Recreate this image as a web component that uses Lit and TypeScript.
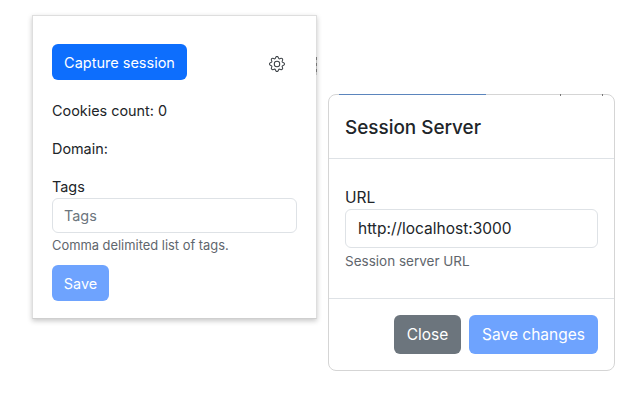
import { LitElement, html, css } from "lit";
import { customElement } from "lit/decorators.js";

@customElement("app-root")
export class AppRoot extends LitElement {
  static styles = css`
    :host { display: block; width: 640px; height: 400px; overflow: hidden; background: #fff; font-family: Inter, "Liberation Sans", sans-serif; color: #212529; }
    * { box-sizing: border-box; }
    .page { display: flex; align-items: flex-start; padding: 15px 0 0 32px; gap: 11px; }
    .panel { position: relative; width: 285px; height: 304px; background: #fff; border: 1px solid #dedede; border-bottom-color: #cfcfcf; box-shadow: 0 2px 5px rgba(0,0,0,.22); padding: 28px 19px 0; font-size: 14.4px; }
    .edge { position: absolute; left: 283px; top: 41px; width: 1px; height: 18px; background: repeating-linear-gradient(#777 0 3px, #bbb 3px 6px); }
    .top { display: flex; justify-content: space-between; align-items: center; padding-right: 12px; }
    .btn { display: flex; align-items: center; justify-content: center; border: 0; color: #fff; font: inherit; padding: 0; }
    .capture { width: 135px; height: 36px; border-radius: 6px; background: #0d6efd; font-size: 14.5px; }
    .gear { width: 16px; height: 16px; margin-top: 3px; fill: #3a3f44; display: block; }
    .line { margin-top: 21px; line-height: 20px; height: 20px; }
    .line.second { margin-top: 18px; }
    .line.tags { margin-top: 18px; }
    .input { display: flex; align-items: center; border: 1px solid #dee2e6; border-radius: 6px; }
    .tagsinput { width: 245px; height: 35px; margin-top: 1px; padding-left: 11px; color: #6c757d; }
    .help { color: #5f666d; font-size: 12.9px; line-height: 16px; margin-top: 5px; }
    .save { width: 57px; height: 36px; margin-top: 11px; border-radius: 6px; background: #6ea3fe; }
    .modal { position: relative; width: 287px; height: 277px; margin-top: 79px; border: 1px solid #d5d5d5; border-radius: 8px; background: #fff; font-size: 15.5px; }
    .tab { position: absolute; left: 10px; top: -1px; width: 147px; height: 1px; background: #5b85bd; }
    .tick { position: absolute; top: -1px; width: 1px; height: 2px; background: #777; }
    .t1 { left: 231px; }
    .t2 { left: 273px; }
    .head { height: 64px; display: flex; align-items: center; padding: 2px 0 0 16px; border-bottom: 1px solid #dee2e6; font-size: 18.9px; font-weight: 500; }
    .body { height: 139px; padding: 29px 16px 0; }
    .body .label { line-height: 20px; height: 20px; }
    .urlinput { width: 253px; height: 39px; margin-top: 1px; padding-left: 12px; color: #212529; }
    .body .help { font-size: 13.5px; margin-top: 4px; line-height: 18px; }
    .foot { display: flex; justify-content: flex-end; gap: 8px; padding: 16px 16px 0; border-top: 1px solid #dee2e6; }
    .foot .btn { height: 39px; border-radius: 6px; }
    .close { width: 67px; background: #6c757d; }
    .changes { width: 129px; background: #6ea3fe; }
  `;

  render() {
    return html`
      <div class="page">
        <section class="panel">
          <span class="edge"></span>
          <div class="top">
            <button class="btn capture">Capture session</button>
            <svg class="gear" viewBox="0 0 16 16" aria-hidden="true">
              <path d="M8 4.754a3.246 3.246 0 1 0 0 6.492 3.246 3.246 0 0 0 0-6.492zM5.754 8a2.246 2.246 0 1 1 4.492 0 2.246 2.246 0 0 1-4.492 0z"/>
              <path d="M9.796 1.343c-.527-1.79-3.065-1.79-3.592 0l-.094.319a.873.873 0 0 1-1.255.52l-.292-.16c-1.64-.892-3.433.902-2.54 2.541l.159.292a.873.873 0 0 1-.52 1.255l-.319.094c-1.79.527-1.79 3.065 0 3.592l.319.094a.873.873 0 0 1 .52 1.255l-.16.292c-.892 1.64.901 3.434 2.541 2.54l.292-.159a.873.873 0 0 1 1.255.52l.094.319c.527 1.79 3.065 1.79 3.592 0l.094-.319a.873.873 0 0 1 1.255-.52l.292.16c1.64.893 3.434-.902 2.54-2.541l-.159-.292a.873.873 0 0 1 .52-1.255l.319-.094c1.79-.527 1.79-3.065 0-3.592l-.319-.094a.873.873 0 0 1-.52-1.255l.16-.292c.893-1.64-.902-3.433-2.541-2.54l-.292.159a.873.873 0 0 1-1.255-.52l-.094-.319zm-2.633.283c.246-.835 1.428-.835 1.674 0l.094.319a1.873 1.873 0 0 0 2.693 1.115l.291-.16c.764-.415 1.6.42 1.184 1.185l-.159.292a1.873 1.873 0 0 0 1.116 2.692l.318.094c.835.246.835 1.428 0 1.674l-.319.094a1.873 1.873 0 0 0-1.115 2.693l.16.291c.415.764-.42 1.6-1.185 1.184l-.291-.159a1.873 1.873 0 0 0-2.693 1.116l-.094.318c-.246.835-1.428.835-1.674 0l-.094-.319a1.873 1.873 0 0 0-2.692-1.115l-.292.16c-.764.415-1.6-.42-1.184-1.185l.159-.291A1.873 1.873 0 0 0 1.945 8.93l-.319-.094c-.835-.246-.835-1.428 0-1.674l.319-.094A1.873 1.873 0 0 0 3.06 4.377l-.16-.292c-.415-.764.42-1.6 1.185-1.184l.292.159a1.873 1.873 0 0 0 2.692-1.115l.094-.319z"/>
            </svg>
          </div>
          <div class="line">Cookies count: 0</div>
          <div class="line second">Domain:</div>
          <div class="line tags">Tags</div>
          <div class="input tagsinput">Tags</div>
          <div class="help">Comma delimited list of tags.</div>
          <button class="btn save">Save</button>
        </section>
        <section class="modal">
          <span class="tab"></span>
          <span class="tick t1"></span>
          <span class="tick t2"></span>
          <div class="head">Session Server</div>
          <div class="body">
            <div class="label">URL</div>
            <div class="input urlinput">http://localhost:3000</div>
            <div class="help">Session server URL</div>
          </div>
          <div class="foot">
            <button class="btn close">Close</button>
            <button class="btn changes">Save changes</button>
          </div>
        </section>
      </div>
    `;
  }
}
